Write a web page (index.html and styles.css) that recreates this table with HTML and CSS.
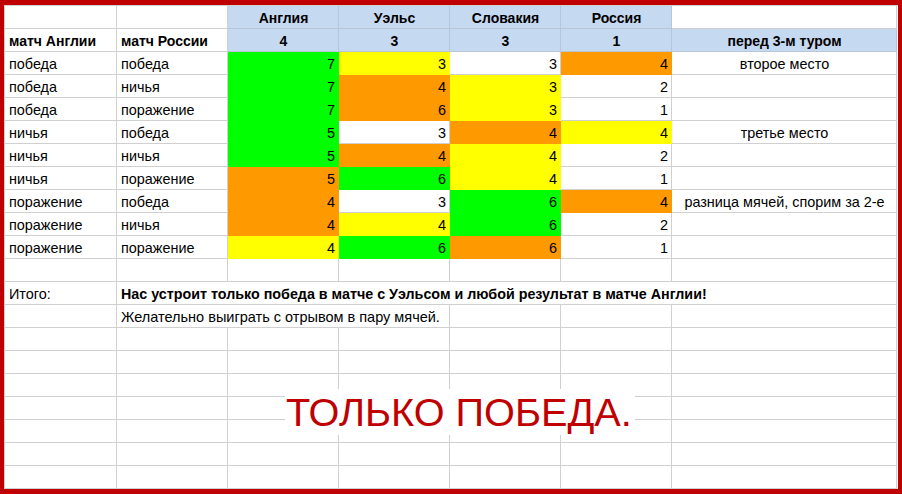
FILE: index.html
```html
<!DOCTYPE html>
<html lang="ru">
<head>
<meta charset="utf-8">
<title>Расклады перед 3-м туром</title>
<link rel="stylesheet" href="styles.css">
</head>
<body>
<div class="frame">
  <div class="sheet">
    <!-- row 1 -->
    <div class="c"></div><div class="c"></div>
    <div class="c h b ctr">Англия</div><div class="c h b ctr">Уэльс</div><div class="c h b ctr">Словакия</div><div class="c h b ctr">Россия</div>
    <div class="c"></div>
    <!-- row 2 -->
    <div class="c b hd">матч Англии</div><div class="c b hd">матч России</div>
    <div class="c h b ctr">4</div><div class="c h b ctr">3</div><div class="c h b ctr">3</div><div class="c h b ctr">1</div>
    <div class="c h b ctr">перед 3-м туром</div>
    <!-- data -->
    <div class="c">победа</div><div class="c">победа</div>
    <div class="c num g">7</div><div class="c num y">3</div><div class="c num">3</div><div class="c num o">4</div>
    <div class="c ctr">второе место</div>

    <div class="c">победа</div><div class="c">ничья</div>
    <div class="c num g">7</div><div class="c num o">4</div><div class="c num y">3</div><div class="c num">2</div>
    <div class="c"></div>

    <div class="c">победа</div><div class="c">поражение</div>
    <div class="c num g">7</div><div class="c num o">6</div><div class="c num y">3</div><div class="c num">1</div>
    <div class="c"></div>

    <div class="c">ничья</div><div class="c">победа</div>
    <div class="c num g">5</div><div class="c num">3</div><div class="c num o">4</div><div class="c num y">4</div>
    <div class="c ctr">третье место</div>

    <div class="c">ничья</div><div class="c">ничья</div>
    <div class="c num g">5</div><div class="c num o">4</div><div class="c num y">4</div><div class="c num">2</div>
    <div class="c"></div>

    <div class="c">ничья</div><div class="c">поражение</div>
    <div class="c num o">5</div><div class="c num g">6</div><div class="c num y">4</div><div class="c num">1</div>
    <div class="c"></div>

    <div class="c">поражение</div><div class="c">победа</div>
    <div class="c num o">4</div><div class="c num">3</div><div class="c num g">6</div><div class="c num o">4</div>
    <div class="c ctr">разница мячей, спорим за 2-е</div>

    <div class="c">поражение</div><div class="c">ничья</div>
    <div class="c num o">4</div><div class="c num y">4</div><div class="c num g">6</div><div class="c num">2</div>
    <div class="c"></div>

    <div class="c">поражение</div><div class="c">поражение</div>
    <div class="c num y">4</div><div class="c num g">6</div><div class="c num o">6</div><div class="c num">1</div>
    <div class="c"></div>
    <!-- empty row -->
    <div class="c"></div><div class="c"></div><div class="c"></div><div class="c"></div><div class="c"></div><div class="c"></div><div class="c"></div>
    <!-- summary -->
    <div class="c">Итого:</div>
    <div class="c b span6 note">Нас устроит только победа в матче с Уэльсом и любой результат в матче Англии!</div>
    <div class="c"></div>
    <div class="c span3 wish">Желательно выиграть с отрывом в пару мячей.</div>
    <div class="c"></div><div class="c"></div><div class="c"></div>
    <!-- empty rows -->
    <div class="c"></div><div class="c"></div><div class="c"></div><div class="c"></div><div class="c"></div><div class="c"></div><div class="c"></div>
    <div class="c"></div><div class="c"></div><div class="c"></div><div class="c"></div><div class="c"></div><div class="c"></div><div class="c"></div>
    <div class="c"></div><div class="c"></div><div class="c"></div><div class="c"></div><div class="c"></div><div class="c"></div><div class="c"></div>
    <div class="c"></div><div class="c"></div><div class="c"></div><div class="c"></div><div class="c"></div><div class="c"></div><div class="c"></div>
    <div class="c"></div><div class="c"></div><div class="c"></div><div class="c"></div><div class="c"></div><div class="c"></div><div class="c"></div>
    <div class="c"></div><div class="c"></div><div class="c"></div><div class="c"></div><div class="c"></div><div class="c"></div><div class="c"></div>
    <div class="c"></div><div class="c"></div><div class="c"></div><div class="c"></div><div class="c"></div><div class="c"></div><div class="c"></div>
  </div>
  <div class="banner">ТОЛЬКО ПОБЕДА.</div>
</div>
</body>
</html>
```

FILE: styles.css
```css
* {
  box-sizing: border-box;
}

html, body {
  margin: 0;
  padding: 0;
  background: #ffffff;
}

.frame {
  position: relative;
  width: 902px;
  height: 494px;
  border-style: solid;
  border-color: #c00000;
  border-width: 5px 4px 5px 4px;
  background: #ffffff;
  overflow: hidden;
}

.sheet {
  display: grid;
  grid-template-columns: 112px repeat(5, 111px) 225px;
  grid-auto-rows: 23px;
  width: 893px;
  border-left: 1px solid #d0d0d0;
  border-top: 1px solid #d0d0d0;
  font-family: "Liberation Sans", Arial, sans-serif;
  font-size: 14.4px;
  color: #000000;
}

.c {
  border-right: 1px solid #d0d0d0;
  border-bottom: 1px solid #d0d0d0;
  padding: 1px 3px 0 4px;
  line-height: 22px;
  white-space: nowrap;
  overflow: visible;
  background: #ffffff;
}

.b {
  font-weight: bold;
}

.hd {
  font-size: 14px;
}

.ctr {
  text-align: center;
}

.num {
  text-align: right;
}

.h {
  background: #c5d9f1;
  border-color: #b7c5d6;
  font-size: 14px;
}

.g {
  background: #00ff00;
  border-color: #00ff00;
}

.y {
  background: #ffff00;
  border-color: #ffff00;
}

.o {
  background: #ff9900;
  border-color: #ff9900;
}

.span6 {
  grid-column: span 6;
}

.span3 {
  grid-column: span 3;
}

.note {
  font-size: 14.3px;
}

.wish {
  font-size: 14.5px;
}

.banner {
  position: absolute;
  left: 281px;
  top: 384px;
  width: 350px;
  height: 46px;
  padding-left: 1px;
  background: #ffffff;
  color: #c00000;
  font-family: "Liberation Sans", Arial, sans-serif;
  font-size: 39.7px;
  line-height: 46px;
  white-space: nowrap;
}
```
